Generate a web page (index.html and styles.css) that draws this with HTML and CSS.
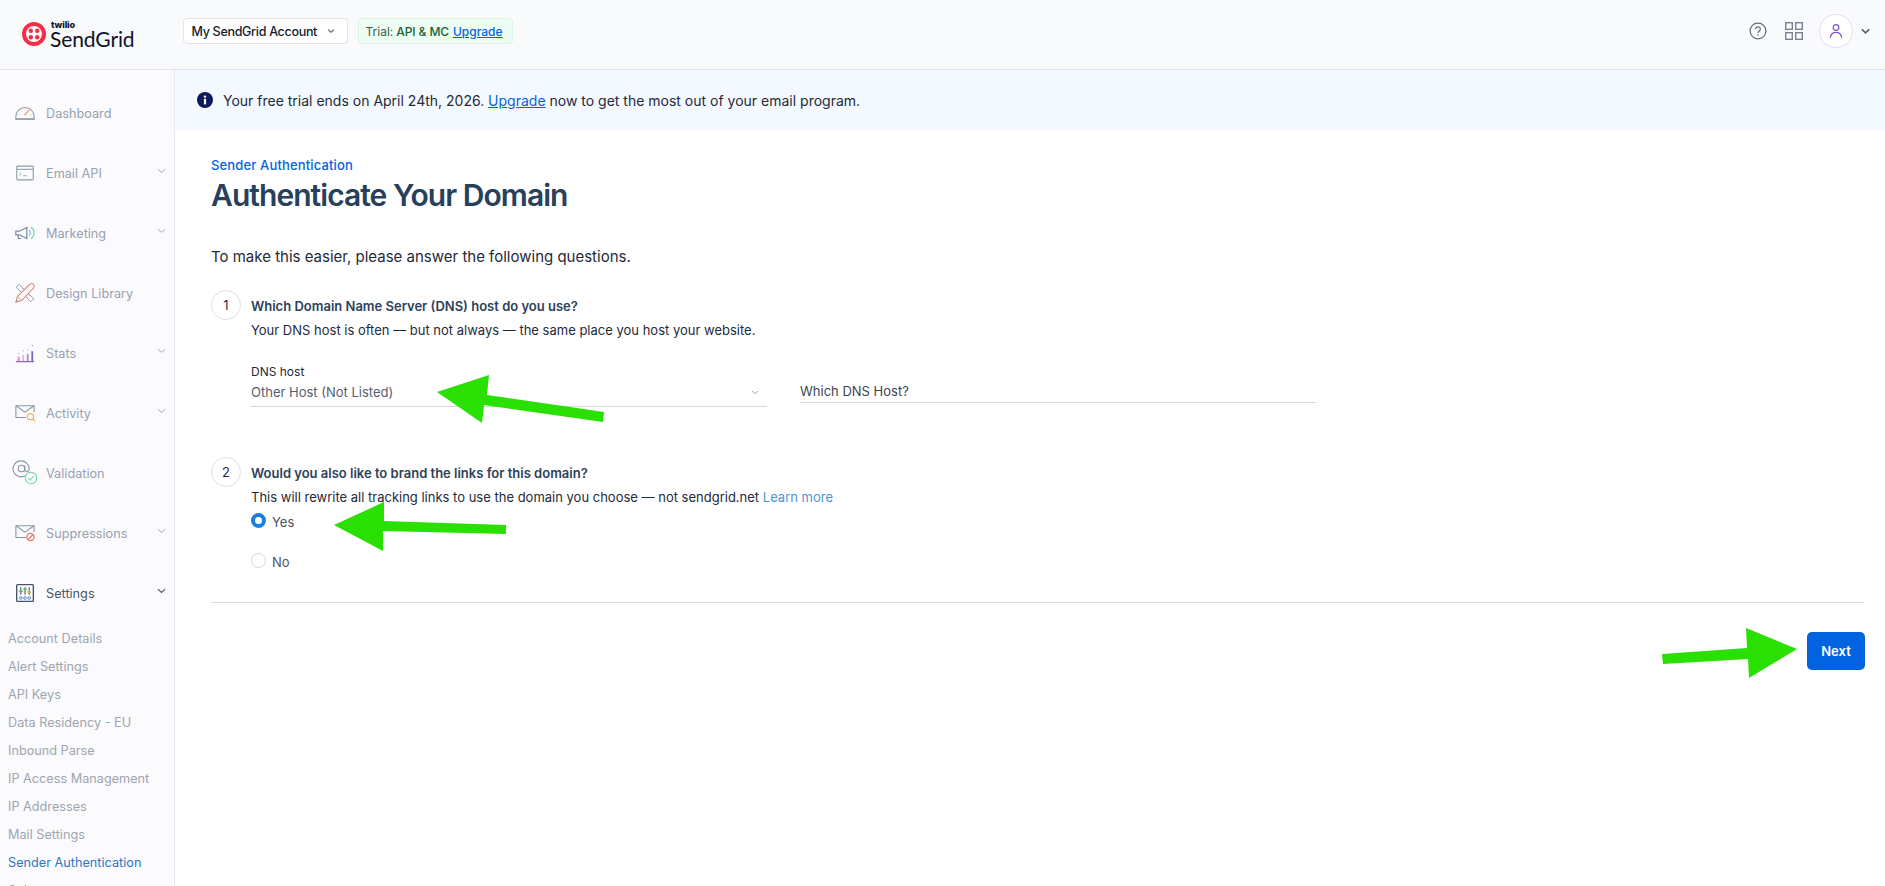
FILE: index.html
```html
<!DOCTYPE html>
<html lang="en">
<head>
<meta charset="utf-8">
<title>Authenticate Your Domain</title>
<link rel="stylesheet" href="styles.css">
</head>
<body>
<div class="app">
  <header class="topbar">
    <div class="logo">
      <svg class="logo-mark" viewBox="0 0 24 24"><circle cx="12" cy="12" r="10" fill="none" stroke="#f22f46" stroke-width="4"/><circle cx="8.8" cy="8.8" r="2.2" fill="#f22f46"/><circle cx="15.2" cy="8.8" r="2.2" fill="#f22f46"/><circle cx="8.8" cy="15.2" r="2.2" fill="#f22f46"/><circle cx="15.2" cy="15.2" r="2.2" fill="#f22f46"/></svg>
      <div class="logo-text"><span class="logo-twilio">twilio</span><span class="logo-sendgrid">SendGrid</span></div>
    </div>
    <button class="account"><span>My SendGrid Account</span>
      <svg class="chev-sm" viewBox="0 0 10 6"><path d="M1.5 1.2 5 4.6l3.5-3.4" fill="none" stroke="#4a5566" stroke-width="1.3"/></svg>
    </button>
    <div class="trial"><span class="trial-label">Trial:</span><span class="trial-plan">API &amp; MC</span><a class="trial-link">Upgrade</a></div>
    <div class="top-actions">
      <svg class="help" viewBox="0 0 18 18"><circle cx="9" cy="9" r="7.9" fill="none" stroke="#606b7b" stroke-width="1.2"/><path d="M6.7 7.1a2.3 2.3 0 1 1 3.6 1.9c-.8.5-1.3 1-1.3 1.9" fill="none" stroke="#606b7b" stroke-width="1.2"/><circle cx="9" cy="13" r=".8" fill="#606b7b"/></svg>
      <svg class="apps" viewBox="0 0 18 18"><g fill="none" stroke="#7b8391" stroke-width="1.4"><rect x=".7" y=".7" width="6.6" height="6.6"/><rect x="10.7" y=".7" width="6.6" height="6.6"/><rect x=".7" y="10.7" width="6.6" height="6.6"/><rect x="10.7" y="10.7" width="6.6" height="6.6"/></g></svg>
      <div class="avatar"><svg viewBox="0 0 16 18"><circle cx="8" cy="5" r="3.3" fill="none" stroke="#7a4fc4" stroke-width="1.3"/><path d="M1.5 16.5c.5-4 3-6 6.5-6s6 2 6.5 6" fill="none" stroke="#7a4fc4" stroke-width="1.3"/></svg></div>
      <svg class="chev-user" viewBox="0 0 10 7"><path d="M1 1.2 5 5l4-3.8" fill="none" stroke="#565f6e" stroke-width="1.8"/></svg>
    </div>
  </header>
  <div class="body">
    <nav class="sidebar">
      <div class="nav-item"><svg class="nav-icon" viewBox="0 0 24 18"><path d="M2 13a10 10 0 0 1 20 0v3H2z" fill="none" stroke="#97a1ae" stroke-width="1.2"/><path d="M11.5 11.5l5-6" stroke="#e8946b" stroke-width="1.3"/><path d="M4.6 11l1.4.3M7 6l1 1M12 4v1.5M19.4 11l-1.4.3" stroke="#eac27d" stroke-width="1.1"/><path d="M2 15.6h20" stroke="#97a1ae" stroke-width="2"/></svg><span class="nav-label">Dashboard</span></div>
      <div class="nav-item"><svg class="nav-icon" viewBox="0 0 24 20"><rect x="3" y="2.5" width="18" height="15" rx="1" fill="none" stroke="#8f9aa8" stroke-width="1.2"/><path d="M3 6h18" stroke="#8f9aa8" stroke-width="1.2"/><path d="M6 9l2 2-2 2" fill="none" stroke="#68c8a8" stroke-width="1"/><path d="M10 13h4" stroke="#8f9aa8"/></svg><span class="nav-label">Email API</span><svg class="nav-chev" viewBox="0 0 10 6"><path d="M1 1l4 3.6L9 1" fill="none" stroke="#a2aab5" stroke-width="1.1"/></svg></div>
      <div class="nav-item"><svg class="nav-icon" viewBox="0 0 24 20"><path d="M2 8h4l8-4v12l-8-4H2z M4 12l1 4h3" fill="none" stroke="#7f8b9c" stroke-width="1.3"/><path d="M16.5 7a4 4 0 0 1 0 6" fill="none" stroke="#7fb3d8" stroke-width="1.2"/><path d="M18.5 3.5a8 8 0 0 1 0 13" fill="none" stroke="#6fd9b4" stroke-width="1.2"/></svg><span class="nav-label">Marketing</span><svg class="nav-chev" viewBox="0 0 10 6"><path d="M1 1l4 3.6L9 1" fill="none" stroke="#a2aab5" stroke-width="1.1"/></svg></div>
      <div class="nav-item"><svg class="nav-icon" viewBox="0 0 24 24"><path d="M5 1.5 1.5 5 19 22.5l3.5-3.5z" fill="#fbfbfd" stroke="#97a1ae" stroke-width="1.2"/><path d="M8 8l1.6-1.6M12 12l1.6-1.6M16 16l1.6-1.6" stroke="#97a1ae"/><path d="M1 23l2-7L17.5 1.8a3 3 0 0 1 4.6 4.4L8 21z" fill="#fbfbfd" stroke="#de8c78" stroke-width="1.3"/><path d="M3 16l5 5" stroke="#de8c78"/><path d="M1 23l.8-3 2.2 2.2z" fill="#8f9aa8"/></svg><span class="nav-label">Design Library</span></div>
      <div class="nav-item"><svg class="nav-icon" viewBox="0 0 24 22"><path d="M2 20.5h20" stroke="#8a5aa8" stroke-width="1.3"/><path d="M5 20v-5" stroke="#e87fb5" stroke-width="2"/><path d="M10 20v-7" stroke="#dcb8e8" stroke-width="2"/><path d="M15 20V12" stroke="#a28fe0" stroke-width="2"/><path d="M20 20V9" stroke="#7e6bb8" stroke-width="2"/><path d="M5 11v1M10 8v1M15 7v1M20 2v1.5" stroke="#7b8391" stroke-width="1"/></svg><span class="nav-label">Stats</span><svg class="nav-chev" viewBox="0 0 10 6"><path d="M1 1l4 3.6L9 1" fill="none" stroke="#a2aab5" stroke-width="1.1"/></svg></div>
      <div class="nav-item"><svg class="nav-icon" viewBox="0 0 24 22"><path d="M13 16H2V3h20v7" fill="none" stroke="#8995a5" stroke-width="1.2"/><path d="M2 3l10 7 10-7" fill="none" stroke="#8995a5" stroke-width="1.2"/><circle cx="18" cy="15" r="3.4" fill="none" stroke="#f0b060" stroke-width="1.3"/><path d="M20.5 17.5l2.5 3" stroke="#f0b060" stroke-width="1.3"/></svg><span class="nav-label">Activity</span><svg class="nav-chev" viewBox="0 0 10 6"><path d="M1 1l4 3.6L9 1" fill="none" stroke="#a2aab5" stroke-width="1.1"/></svg></div>
      <div class="nav-item"><svg class="nav-icon nav-icon-at" viewBox="0 0 26 26"><circle cx="9.5" cy="9.5" r="3.3" fill="none" stroke="#8995a5" stroke-width="1.1"/><path d="M12.8 6.2v4.3a2.1 2.1 0 0 0 4.2.2A8 8 0 1 0 13.5 16.5" fill="none" stroke="#8995a5" stroke-width="1.1"/><circle cx="19" cy="19" r="5.7" fill="none" stroke="#6fd9a8" stroke-width="1.1"/><path d="M16.4 19l2 2 3.2-4" fill="none" stroke="#6fd9a8" stroke-width="1.1"/></svg><span class="nav-label">Validation</span></div>
      <div class="nav-item"><svg class="nav-icon" viewBox="0 0 24 22"><path d="M13 16H2V3h20v7" fill="none" stroke="#8995a5" stroke-width="1.2"/><path d="M2 3l10 7 10-7" fill="none" stroke="#8995a5" stroke-width="1.2"/><circle cx="18" cy="15.5" r="4" fill="none" stroke="#e8735f" stroke-width="1.4"/><path d="M15.5 18l5-5" stroke="#e8735f" stroke-width="1.4"/></svg><span class="nav-label">Suppressions</span><svg class="nav-chev" viewBox="0 0 10 6"><path d="M1 1l4 3.6L9 1" fill="none" stroke="#a2aab5" stroke-width="1.1"/></svg></div>
      <div class="nav-item nav-active"><svg class="nav-icon" viewBox="0 0 24 24"><rect x="2" y="2" width="20" height="20" rx="1" fill="none" stroke="#44546a" stroke-width="1.6"/><path d="M7 5v9M12 5v9M17 5v9" stroke="#223"/><path d="M4.5 10h5" stroke="#5cc24c" stroke-width="1.6"/><path d="M9.8 7.5h4.4" stroke="#5cc24c" stroke-width="1.6"/><path d="M14.8 11h4.4" stroke="#c8c040" stroke-width="1.6"/><g fill="none" stroke="#3f7fd0"><circle cx="7" cy="18" r="1.6"/><circle cx="12" cy="18" r="1.6"/><circle cx="17" cy="18" r="1.6"/></g></svg><span class="nav-label">Settings</span><svg class="nav-chev" viewBox="0 0 10 6"><path d="M1 1l4 3.6L9 1" fill="none" stroke="#47566a" stroke-width="1.2"/></svg></div>
      <ul class="submenu">
        <li>Account Details</li>
        <li>Alert Settings</li>
        <li>API Keys</li>
        <li>Data Residency - EU</li>
        <li>Inbound Parse</li>
        <li>IP Access Management</li>
        <li>IP Addresses</li>
        <li>Mail Settings</li>
        <li class="sub-active">Sender Authentication</li>
        <li>Subusers</li>
      </ul>
    </nav>
    <div class="content">
      <div class="banner">
        <svg class="info" viewBox="0 0 16 16"><circle cx="8" cy="8" r="8" fill="#0d1a5c"/><circle cx="8" cy="4.6" r="1.2" fill="#fff"/><rect x="6.9" y="6.8" width="2.2" height="5.6" fill="#fff"/></svg>
        <span>Your free trial ends on April 24th, 2026. <a class="link-under">Upgrade</a> now to get the most out of your email program.</span>
      </div>
      <main class="main">
        <div class="crumb">Sender Authentication</div>
        <h1 class="title">Authenticate Your Domain</h1>
        <p class="intro">To make this easier, please answer the following questions.</p>
        <section class="step step-one">
          <div class="step-num">1</div>
          <div class="step-body">
            <div class="step-title">Which Domain Name Server (DNS) host do you use?</div>
            <div class="step-sub">Your DNS host is often — but not always — the same place you host your website.</div>
            <div class="fields">
              <div class="select">
                <div class="select-label">DNS host</div>
                <div class="select-value"><span>Other Host (Not Listed)</span><svg class="select-chev" viewBox="0 0 10 6"><path d="M1 1l4 3.6L9 1" fill="none" stroke="#8a94a1" stroke-width="1"/></svg></div>
              </div>
              <div class="text-input">Which DNS Host?</div>
            </div>
          </div>
        </section>
        <section class="step step-two">
          <div class="step-num">2</div>
          <div class="step-body">
            <div class="step-title">Would you also like to brand the links for this domain?</div>
            <div class="step-sub">This will rewrite all tracking links to use the domain you choose — not sendgrid.net <a class="learn">Learn more</a></div>
            <div class="radio radio-yes"><span class="dot dot-on"></span>Yes</div>
            <div class="radio radio-no"><span class="dot"></span>No</div>
          </div>
        </section>
        <hr class="rule">
        <div class="actions"><button class="next">Next</button></div>
      </main>
    </div>
  </div>
</div>
<svg class="arrows" viewBox="0 0 1885 886">
  <polygon points="437,392 489,375 487,395 604,412 603,422 484,405 482,423"/>
  <polygon points="334,525 384,502 384,521 506,525 506,534 383,531 383,551"/>
  <polygon points="1797,649 1746,628 1747,648 1662,654 1663,664 1748,659 1749,678"/>
</svg>
</body>
</html>
```
FILE: styles.css
```css
* { box-sizing: border-box; }
html, body { margin: 0; height: 100%; overflow: hidden; }
body { font-family: Inter, "Liberation Sans", sans-serif; color: #1f2a3a; background: #fff; position: relative; }
a { color: inherit; }
.app { width: 1885px; height: 886px; display: flex; flex-direction: column; }

.topbar { height: 70px; flex: none; display: flex; align-items: center; background: #f9fafc; border-bottom: 1px solid #e1e3ea; padding: 0 15px 7px 22px; }
.logo { display: flex; align-items: center; width: 160.5px; padding-top: 6px; }
.logo-mark { width: 24px; height: 24px; flex: none; }
.logo-text { display: flex; flex-direction: column; margin-left: 4px; color: #0d122b; }
.logo-twilio { font: 800 9px/8px Inter, sans-serif; margin-left: 1px; letter-spacing: -.1px; }
.logo-sendgrid { font: 400 21px/19px Lato, sans-serif; letter-spacing: -.1px; }
.account { width: 165px; height: 26px; background: #fff; border: 1px solid #e1e3ea; border-radius: 4px; display: flex; align-items: center; font: 500 12.5px Inter, sans-serif; letter-spacing: -.3px; color: #121c2d; padding: 0 8px; white-space: nowrap; }
.chev-sm { width: 8px; height: 6px; margin-left: 10px; flex: none; }
.trial { width: 155px; height: 26px; margin-left: 10px; background: #edfdf3; border: 1px solid #dcf3e4; border-radius: 4px; display: flex; align-items: center; font-size: 12px; padding-left: 7px; white-space: nowrap; }
.trial-label { color: #3d5a4a; }
.trial-plan { color: #14622f; font-weight: 500; margin-left: 3px; letter-spacing: -.1px; }
.trial-link { color: #0263e0; text-decoration: underline; font-weight: 500; margin-left: 4px; }
.top-actions { margin-left: auto; display: flex; align-items: center; }
.help { width: 18px; height: 18px; }
.apps { width: 18px; height: 18px; margin-left: 18px; }
.avatar { width: 34px; height: 34px; margin-left: 16px; border-radius: 50%; border: 1px solid #e5dcf5; background: #fff; display: flex; align-items: center; justify-content: center; }
.avatar svg { width: 14px; height: 16px; }
.chev-user { width: 9px; height: 7px; margin-left: 8px; }

.body { flex: 1; display: flex; min-height: 0; }
.sidebar { width: 175px; flex: none; background: #fbfbfe; border-right: 1px solid #e8eaef; padding-top: 13px; overflow: hidden; }
.nav-item { height: 60px; display: flex; align-items: center; padding: 0 8px 0 14px; font-size: 12.7px; color: #98a1ae; position: relative; }
.nav-icon { width: 22px; height: 20px; flex: none; }
.nav-icon-at { height: 26px; width: 26px; margin: -2px -2px 0 -2px; }
.nav-label { margin-left: 10px; padding-top: 1px; flex: 1; white-space: nowrap; }
.nav-chev { width: 9px; height: 6px; margin-top: -4px; }
.nav-active { color: #47566a; }
.submenu { list-style: none; margin: 0; padding: 2px 0 0 8px; font-size: 12.7px; color: #9ea5ae; }
.submenu li { height: 28px; line-height: 28px; white-space: nowrap; }
.sub-active { color: #2f75c5; }

.content { flex: 1; min-width: 0; display: flex; flex-direction: column; }
.banner { height: 60px; flex: none; background: #f4f9ff; display: flex; align-items: center; padding-left: 22px; font-size: 14px; color: #1f2a3a; }
.info { width: 16px; height: 16px; margin-right: 10px; flex: none; }
.link-under { color: #0263e0; text-decoration: underline; }
.main { padding: 27px 21px 0 36px; flex: 1; }
.crumb { font-size: 13px; font-weight: 500; letter-spacing: .15px; line-height: 16px; color: #0263e0; }
.title { margin: 2px 0 0; font-size: 30px; line-height: 40px; font-weight: 600; color: #27405c; letter-spacing: -.95px; }
.intro { margin: 32px 0 0; font-size: 15px; line-height: 20px; color: #1f2a3a; }
.step { display: flex; }
.step-one { margin-top: 23px; }
.step-two { margin-top: 50px; }
.step-num { width: 30px; height: 30px; flex: none; border: 1px solid #dcdfe5; border-radius: 50%; display: flex; align-items: center; justify-content: center; font-size: 13px; color: #1f2a3a; background: #fff; }
.step-body { margin-left: 10px; flex: 1; min-width: 0; }
.step-title { margin-top: 7px; font-size: 13px; line-height: 18px; font-weight: 600; color: #2d4259; }
.step-sub { margin-top: 6px; font-size: 13px; line-height: 18px; color: #1f2a3a; }
.learn { color: #4e94d8; }
.fields { display: flex; gap: 33px; margin-top: 25px; }
.select { width: 516px; }
.select-label { font-size: 12px; line-height: 16px; color: #1f2a3a; }
.select-value { display: flex; justify-content: space-between; align-items: center; height: 27px; font-size: 13px; color: #56616f; border-bottom: 1px solid #d3d6dc; padding: 0 8px 2px 0; }
.select-chev { width: 8px; height: 5px; }
.text-input { width: 516px; height: 23px; margin-top: 16px; font-size: 13px; line-height: 22px; color: #3a4553; border-bottom: 1px solid #d3d6dc; }
.radio { display: flex; align-items: center; font-size: 13px; color: #4a5563; height: 20px; }
.radio-yes { margin-top: 6px; }
.radio-no { margin-top: 20px; }
.dot { width: 15px; height: 15px; border-radius: 50%; border: 1px solid #d3d6dc; background: #fff; margin-right: 6px; margin-top: -3px; flex: none; }
.dot-on { border: 4px solid #1a7fe0; }
.rule { border: 0; border-top: 1px solid #d8dade; margin: 30px 0 0; }
.actions { display: flex; justify-content: flex-end; margin: 29px -1px 0 0; }
.next { width: 58px; height: 38px; border: 0; border-radius: 5px; background: #0263e0; color: #fff; font: 600 13px Inter, sans-serif; }
.arrows { position: absolute; left: 0; top: 0; width: 1885px; height: 886px; pointer-events: none; }
.arrows polygon { fill: #2ae002; }
```
